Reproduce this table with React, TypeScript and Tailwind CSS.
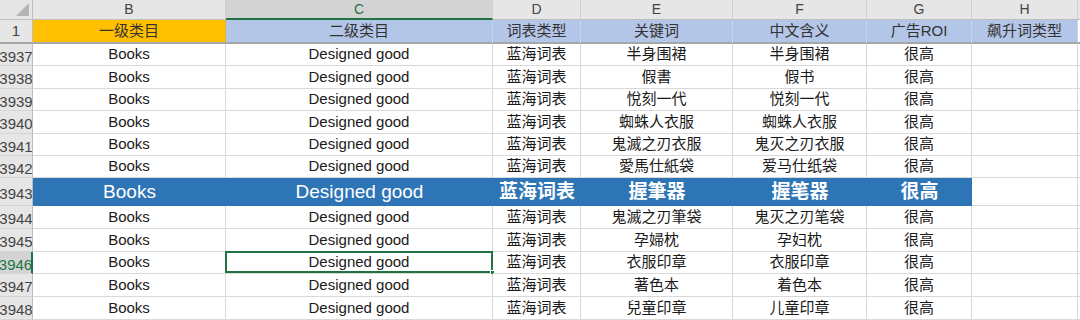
import React from 'react';

type Row = {
    num: string;
    cat1: string;
    cat2: string;
    type: string;
    keyword: string;
    meaning: string;
    roi: string;
    h: string; // row height incl. bottom gridline
    highlight?: boolean;
    selected?: boolean;
};

const rows: Row[] = [
    { num: '3937', cat1: 'Books', cat2: 'Designed good', type: '蓝海词表', keyword: '半身围裙', meaning: '半身围裙', roi: '很高', h: 'h-[22px]' },
    { num: '3938', cat1: 'Books', cat2: 'Designed good', type: '蓝海词表', keyword: '假書', meaning: '假书', roi: '很高', h: 'h-[23px]' },
    { num: '3939', cat1: 'Books', cat2: 'Designed good', type: '蓝海词表', keyword: '悅刻一代', meaning: '悦刻一代', roi: '很高', h: 'h-[22px]' },
    { num: '3940', cat1: 'Books', cat2: 'Designed good', type: '蓝海词表', keyword: '蜘蛛人衣服', meaning: '蜘蛛人衣服', roi: '很高', h: 'h-[23px]' },
    { num: '3941', cat1: 'Books', cat2: 'Designed good', type: '蓝海词表', keyword: '鬼滅之刃衣服', meaning: '鬼灭之刃衣服', roi: '很高', h: 'h-[22px]' },
    { num: '3942', cat1: 'Books', cat2: 'Designed good', type: '蓝海词表', keyword: '愛馬仕紙袋', meaning: '爱马仕纸袋', roi: '很高', h: 'h-[22px]' },
    { num: '3943', cat1: 'Books', cat2: 'Designed good', type: '蓝海词表', keyword: '握筆器', meaning: '握笔器', roi: '很高', h: 'h-[28px]', highlight: true },
    { num: '3944', cat1: 'Books', cat2: 'Designed good', type: '蓝海词表', keyword: '鬼滅之刃筆袋', meaning: '鬼灭之刃笔袋', roi: '很高', h: 'h-[23px]' },
    { num: '3945', cat1: 'Books', cat2: 'Designed good', type: '蓝海词表', keyword: '孕婦枕', meaning: '孕妇枕', roi: '很高', h: 'h-[23px]' },
    { num: '3946', cat1: 'Books', cat2: 'Designed good', type: '蓝海词表', keyword: '衣服印章', meaning: '衣服印章', roi: '很高', h: 'h-[22px]', selected: true },
    { num: '3947', cat1: 'Books', cat2: 'Designed good', type: '蓝海词表', keyword: '著色本', meaning: '着色本', roi: '很高', h: 'h-[23px]' },
    { num: '3948', cat1: 'Books', cat2: 'Designed good', type: '蓝海词表', keyword: '兒童印章', meaning: '儿童印章', roi: '很高', h: 'h-[23px]' },
];

const cols = ['B', 'C', 'D', 'E', 'F', 'G', 'H'];
const widths = ['w-[193px]', 'w-[267px]', 'w-[88px]', 'w-[152px]', 'w-[134px]', 'w-[105px]', 'w-[106px]'];
const headers = ['一级类目', '二级类目', '词表类型', '关键词', '中文含义', '广告ROI', '飙升词类型'];

const font = "font-['Arial','Liberation_Sans','Microsoft_YaHei','Noto_Sans_CJK_SC',sans-serif]";

const RowNum = ({ label, h, active }: { label: string; h: string; active?: boolean }) => (
    <div
        className={`${h} w-[33px] shrink-0 overflow-hidden border-b border-[#d4d4d4] flex items-center justify-center ${
            active ? 'bg-[#d3d3d3] text-[#217346] border-r-2 border-r-[#217346]' : 'bg-[#e6e6e6] text-[#444] border-r border-r-[#bdbdbd]'
        }`}
    >
        <span className="w-[28px] flex justify-center whitespace-nowrap text-[15px] leading-none pt-[3px]">{label}</span>
    </div>
);

const App = () => {
    return (
        <div className={`w-[1080px] h-[320px] overflow-hidden bg-white ${font}`}>
            {/* column letters */}
            <div className="flex h-[20px]">
                <div className="w-[33px] shrink-0 bg-[#e6e6e6] border-r border-b border-[#bdbdbd] flex items-end justify-end pr-[3px] pb-[3px]">
                    <svg width="13" height="13" viewBox="0 0 13 13">
                        <polygon points="13,0 13,13 0,13" fill="#b4b4b4" />
                    </svg>
                </div>
                {cols.map((c, i) => (
                    <div
                        key={c}
                        className={`${widths[i]} shrink-0 flex items-center justify-center text-[14px] border-r border-[#cfcfcf] ${
                            c === 'C'
                                ? 'bg-[#d3d3d3] text-[#217346] border-b-2 border-b-[#217346]'
                                : 'bg-[#e6e6e6] text-[#444] border-b border-b-[#bdbdbd]'
                        }`}
                    >
                        {c}
                    </div>
                ))}
                <div className="flex-1 bg-[#e6e6e6] border-b border-[#bdbdbd]" />
            </div>

            {/* header row 1 */}
            <div className="flex h-[24px]">
                <div className="h-[24px] w-[33px] shrink-0 bg-[#e6e6e6] border-r border-[#bdbdbd] border-b-2 border-b-[#a6a6a6] flex items-center justify-center text-[15px] text-[#444]">
                    <span className="w-[28px] flex justify-center">1</span>
                </div>
                {headers.map((t, i) => (
                    <div
                        key={t}
                        className={`${widths[i]} shrink-0 flex items-center justify-center text-[15px] text-[#333] border-b-2 border-b-[#a6a6a6] ${
                            i === 0 ? 'bg-[#ffc000] border-r border-r-[#e0b040]' : 'bg-[#b4c6e7] border-r border-r-[#c7d3ea]'
                        }`}
                    >
                        {t}
                    </div>
                ))}
                <div className="flex-1 border-b-2 border-b-[#a6a6a6] bg-white" />
            </div>

            {/* data rows */}
            {rows.map((r) => {
                const vals = [r.cat1, r.cat2, r.type, r.keyword, r.meaning, r.roi, ''];
                return (
                    <div key={r.num} className="flex">
                        <RowNum label={r.num} h={r.h} active={r.selected} />
                        {vals.map((v, i) => {
                            const hl = r.highlight && i < 6;
                            const bold = hl && i >= 2;
                            return (
                                <div
                                    key={i}
                                    className={`${r.h} ${widths[i]} shrink-0 relative flex items-center justify-center whitespace-nowrap ${
                                        hl
                                            ? `bg-[#2e75b6] text-white text-[19px] ${bold ? 'font-bold' : ''}`
                                            : 'text-[#1a1a1a] text-[15px] border-r border-b border-[#d9d9d9]'
                                    } ${r.highlight && i === 6 ? 'border-t-0' : ''}`}
                                >
                                    {v}
                                    {r.selected && i === 1 && (
                                        <div className="absolute -left-[1px] -top-[1px] -right-[1px] -bottom-[0px] border-2 border-[#217346]">
                                            <div className="absolute -right-[4px] -bottom-[4px] w-[5px] h-[5px] bg-[#217346] border border-white" />
                                        </div>
                                    )}
                                </div>
                            );
                        })}
                        <div className={`${r.h} flex-1 border-b border-[#d9d9d9]`} />
                    </div>
                );
            })}
        </div>
    );
};

export default App;
